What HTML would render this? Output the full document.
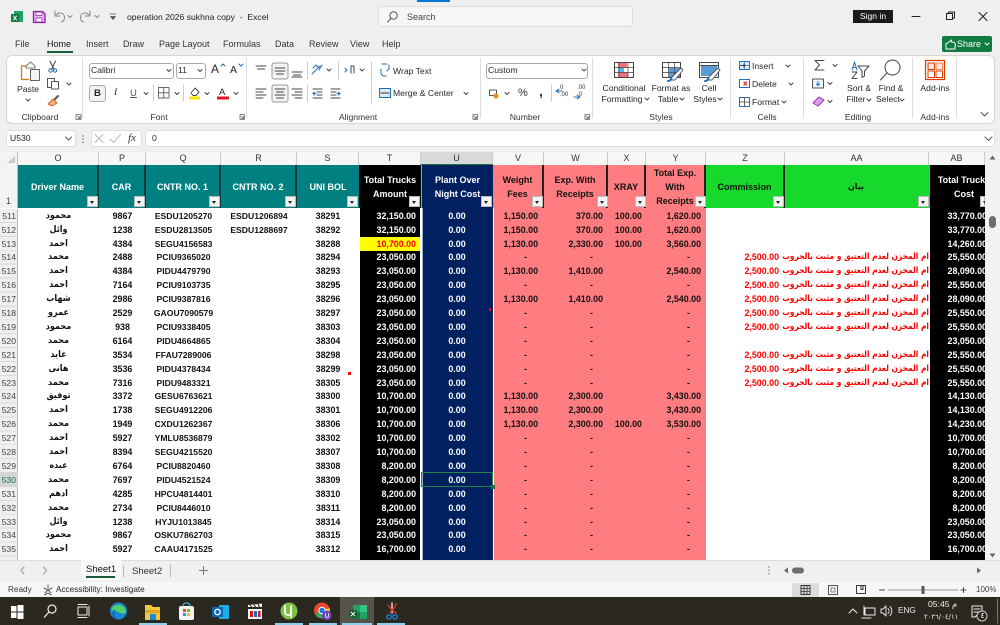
<!DOCTYPE html>
<html><head><meta charset="utf-8"><style>
html,body{margin:0;padding:0;width:1000px;height:625px;overflow:hidden;background:#efefef;font-family:"Liberation Sans","DejaVu Sans",sans-serif;color:#222}
div,span{position:absolute;white-space:nowrap}
svg{position:absolute;left:0;top:0}
.l{font-size:8.6px;line-height:11px;color:#262626}
.c{transform:translateX(-50%)}
.g{font-size:8.6px;line-height:11px;color:#333;transform:translateX(-50%);top:112px}
.t{font-size:9px;line-height:12px;top:38px;color:#333}
.h{top:152px;height:13px;line-height:13px;font-size:9px;text-align:center;background:#f6f6f6;border-right:1px solid #ccc;color:#333;box-sizing:border-box}
.k{top:165px;height:43px;box-sizing:border-box;border-right:2px solid #0b3b3b;color:#fff;font-weight:bold;font-size:9px;text-align:center;line-height:14px;display:flex;align-items:center;justify-content:center;white-space:normal}
.f{position:absolute;top:196px;width:11px;height:11px;background:#f3f3f3;border:1px solid #bbb;box-sizing:border-box}
.f:after{content:"";position:absolute;left:2px;top:4px;border:2.5px solid transparent;border-top:3px solid #222}
.r{position:absolute;left:0;width:985px;height:14px;overflow:hidden}
.r b{position:absolute;top:0;line-height:14px;font-size:8.9px;font-weight:bold;color:#111;white-space:nowrap}
.r .n{left:0;width:16px;text-align:right;font-weight:normal;color:#444;font-size:8.6px}
.r .o{left:18px;width:81px;text-align:center;font-size:9px;color:#111;font-family:"DejaVu Sans",sans-serif;transform:scaleX(.9)}
.r .p{left:99px;width:47px;text-align:center}
.r .q{left:146px;width:75px;text-align:center;font-size:8.6px}
.r .s{left:221px;width:76px;text-align:center;font-size:8.6px}
.r .u{left:297px;width:62px;text-align:center}
.r .a{left:360px;width:56px;text-align:right;color:#fff}
.r .y{left:360px;width:56px;text-align:right;color:#f00}
.r .w{left:422px;width:70px;text-align:center;color:#fff}
.r .v{left:494px;width:44px;text-align:right}
.r .x{left:544px;width:59px;text-align:right}
.r .z{left:608px;width:34px;text-align:right}
.r .e{left:646px;width:55px;text-align:right}
.r .d1{left:494px;width:33px;text-align:right}
.r .d2{left:544px;width:49px;text-align:right}
.r .d3{left:646px;width:44px;text-align:right}
.r .m{left:706px;width:73px;text-align:right;color:#f00}
.r .ar{left:729px;width:200px;direction:rtl;text-align:right;color:#f00;font-size:8.6px;font-family:"DejaVu Sans",sans-serif;transform:scaleX(.87);transform-origin:100% 50%}
.r .t2{left:930px;width:57px;text-align:right;color:#fff}
.cb{background:#fff;border:1px solid #aaa;border-radius:3px;box-sizing:border-box}
</style></head><body>

<div style="left:417px;top:0;width:33px;height:1.5px;background:#0078d4"></div>
<div style="left:378px;top:6px;width:255px;height:21px;background:#f6f6f6;border:1px solid #dcdcdc;border-radius:3px;box-sizing:border-box"></div>
<span style="left:407px;top:11px;font-size:9px;line-height:12px;color:#444">Search</span>
<span style="left:127px;top:11px;font-size:8.6px;line-height:12px;color:#222;white-space:pre">operation 2026 sukhna copy  -  Excel</span>
<div style="left:853px;top:10px;width:40px;height:13px;background:#1a1a1a;color:#fff;font-size:8.6px;line-height:13px;text-align:center">Sign in</div>
<span class="t" style="left:15px">File</span><span class="t" style="left:47px;color:#111">Home</span><span class="t" style="left:86px">Insert</span><span class="t" style="left:123px">Draw</span><span class="t" style="left:159px">Page Layout</span><span class="t" style="left:223px">Formulas</span><span class="t" style="left:275px">Data</span><span class="t" style="left:309px">Review</span><span class="t" style="left:350px">View</span><span class="t" style="left:382px">Help</span>
<div style="left:47px;top:51px;width:26px;height:1.5px;background:#1d5c3a"></div>
<div style="left:942px;top:36px;width:50px;height:16px;background:#107c41;border-radius:2px"></div>
<span style="left:957px;top:38px;font-size:9px;line-height:12px;color:#fff">Share</span>

<div style="left:6px;top:55px;width:989px;height:69px;background:#fff;border:1px solid #d6d6d6;border-radius:6px;box-sizing:border-box"></div>

<div class="cb" style="left:89px;top:62.500px;width:85px;height:16px"></div><span class="l" style="left:91px;top:65px;font-size:8.6px">Calibri</span>
<div class="cb" style="left:176px;top:62.500px;width:30px;height:16px"></div><span class="l" style="left:178px;top:65px">11</span>
<div class="cb" style="left:89px;top:85px;width:17px;height:17px;background:#f2f2f2"></div><span style="left:94px;top:87px;font-size:9.5px;font-weight:bold;line-height:13px">B</span>
<span style="left:114px;top:87px;font-size:9.5px;font-style:italic;font-family:'Liberation Serif',serif;line-height:13px">I</span>
<span style="left:130px;top:87px;font-size:9.5px;text-decoration:underline;line-height:13px;color:#555">U</span>
<div class="cb" style="left:486px;top:62.500px;width:102px;height:16px"></div><span class="l" style="left:488px;top:65px">Custom</span>
<span style="left:211px;top:62px;font-size:12px;line-height:14px">A</span><span style="left:230px;top:63px;font-size:10.5px;line-height:14px">A</span>
<span style="left:219px;top:87px;font-size:9.5px;line-height:11px">A</span>
<span class="l" style="left:393px;top:66px">Wrap Text</span><span class="l" style="left:393px;top:88px">Merge &amp; Center</span>
<span class="l c" style="left:28px;top:84px">Paste</span>
<span style="left:518px;top:86px;font-size:11px;line-height:14px;color:#333">%</span>
<span style="left:539px;top:84px;font-size:14px;font-weight:bold;line-height:14px;color:#333">,</span>
<span style="left:560px;top:85px;font-size:6px;line-height:7px;color:#333">0<br>.00</span><span style="left:577px;top:85px;font-size:6px;line-height:7px;color:#333">.00<br>&nbsp;0</span>
<span class="l c" style="left:624px;top:83px">Conditional</span><span class="l c" style="left:622px;top:94px">Formatting</span>
<span class="l c" style="left:671px;top:83px">Format as</span><span class="l c" style="left:668px;top:94px">Table</span>
<span class="l c" style="left:709px;top:83px">Cell</span><span class="l c" style="left:705px;top:94px">Styles</span>
<span class="l" style="left:752px;top:61px">Insert</span><span class="l" style="left:752px;top:79px">Delete</span><span class="l" style="left:752px;top:97px">Format</span>
<span class="l c" style="left:859px;top:83px">Sort &amp;</span><span class="l c" style="left:856px;top:94px">Filter</span>
<span class="l c" style="left:891px;top:83px">Find &amp;</span><span class="l c" style="left:888px;top:94px">Select</span>
<span class="l c" style="left:935px;top:83px">Add-ins</span>
<span class="g" style="left:40px">Clipboard</span><span class="g" style="left:159px">Font</span><span class="g" style="left:358px">Alignment</span><span class="g" style="left:525px">Number</span><span class="g" style="left:661px">Styles</span><span class="g" style="left:767px">Cells</span><span class="g" style="left:858px">Editing</span><span class="g" style="left:935px">Add-ins</span>

<div class="cb" style="left:6px;top:130px;width:70px;height:17px;border-color:#ddd"></div><span class="l" style="left:10px;top:133px">U530</span>
<div class="cb" style="left:91px;top:130px;width:51px;height:17px;border-color:#ddd"></div>
<span style="left:128px;top:131px;font-family:'Liberation Serif',serif;font-style:italic;font-size:11px;line-height:14px;color:#333">fx</span>
<div class="cb" style="left:145px;top:130px;width:850px;height:17px;border-color:#ddd"></div><span class="l" style="left:152px;top:133px">0</span>

<div style="left:0;top:152px;width:1000px;height:408px;background:#fff"></div>
<div style="left:0;top:152px;width:18px;height:56px;background:#f3f3f3;border-right:1px solid #bbb;box-sizing:border-box"></div>
<div style="left:0;top:208.700px;width:18px;height:351.300px;background:repeating-linear-gradient(180deg,#efefef 0,#efefef 13px,#d8d8d8 13px,#d8d8d8 13.896px);border-right:1px solid #bbb;box-sizing:border-box"></div>
<span style="left:6px;top:195px;font-size:9px;line-height:12px;color:#444">1</span>
<div class="h" style="left:18px;width:81px">O</div><div class="h" style="left:99px;width:47px">P</div><div class="h" style="left:146px;width:75px">Q</div><div class="h" style="left:221px;width:76px">R</div><div class="h" style="left:297px;width:62px">S</div><div class="h" style="left:359px;width:62px">T</div><div class="h" style="left:421px;width:72px;background:#d9d9d9;border-bottom:1px solid #1e7145">U</div><div class="h" style="left:493px;width:51px">V</div><div class="h" style="left:544px;width:64px">W</div><div class="h" style="left:608px;width:38px">X</div><div class="h" style="left:646px;width:60px">Y</div><div class="h" style="left:706px;width:79px">Z</div><div class="h" style="left:785px;width:144px">AA</div><div class="h" style="left:929px;width:56px">AB</div>

<div class="k" style="left:18px;width:81px;background:#008080">Driver Name</div>
<div class="k" style="left:99px;width:47px;background:#008080">CAR</div>
<div class="k" style="left:146px;width:75px;background:#008080">CNTR NO. 1</div>
<div class="k" style="left:221px;width:76px;background:#008080">CNTR NO. 2</div>
<div class="k" style="left:297px;width:62px;background:#008080;border-right:0">UNI BOL</div>
<div class="k" style="left:359px;width:62px;background:#000;border:0">Total Trucks<br>Amount</div>
<div class="k" style="left:421px;width:72px;background:#002060;border:0;border-left:1px solid #8ea5c8">Plant Over<br>Night Cost</div>
<div class="k" style="left:493px;width:51px;background:#ff7c80;color:#111;border-color:#222">Weight<br>Fees</div>
<div class="k" style="left:544px;width:64px;background:#ff7c80;color:#111;border-color:#222">Exp. With<br>Receipts</div>
<div class="k" style="left:608px;width:38px;background:#ff7c80;color:#111;border-color:#222">XRAY</div>
<div class="k" style="left:646px;width:60px;background:#ff7c80;color:#111;border-color:#222">Total Exp.<br>With<br>Receipts</div>
<div class="k" style="left:706px;width:79px;background:#16d92c;color:#111;border-color:#222">Commission</div>
<div class="k" style="left:785px;width:145px;background:#16d92c;color:#111;border:0;font-family:'DejaVu Sans',sans-serif;font-size:8px;padding-right:3px">بيان</div>
<div class="k" style="left:930px;width:55px;background:#000;border:0;overflow:hidden;display:block"><div style="left:4px;top:8px;width:60px;text-align:center">Total Trucks<br>Cost</div></div>

<div class="f" style="left:87px"></div><div class="f" style="left:134px"></div><div class="f" style="left:209px"></div><div class="f" style="left:285px"></div><div class="f" style="left:347px"></div><div class="f" style="left:409px"></div><div class="f" style="left:481px"></div><div class="f" style="left:532px"></div><div class="f" style="left:597px"></div><div class="f" style="left:635px"></div><div class="f" style="left:695px"></div><div class="f" style="left:773px"></div><div class="f" style="left:918px"></div><div class="f" style="left:980px;width:5px"></div>

<div style="left:360px;top:208px;width:60px;height:352px;background:#000"></div>
<div style="left:422px;top:208px;width:71px;height:352px;background:#002060;border-left:1px solid #9db1d0;box-sizing:border-box"></div>
<div style="left:493.500px;top:208px;width:212.500px;height:352px;background:#ff7c80"></div>
<div style="left:930px;top:208px;width:55px;height:352px;background:#000"></div>
<div style="left:360px;top:236.500px;width:60px;height:14px;background:#ff0"></div>
<div style="left:0;top:472.800px;width:18px;height:14px;background:#d5d5d5"></div>

<div class="r" style="top:208.700px"><b class="n">511</b><b class="o">محمود</b><b class="p">9867</b><b class="q">ESDU1205270</b><b class="s">ESDU1206894</b><b class="u">38291</b><b class="a">32,150.00</b><b class="w">0.00</b><b class="v">1,150.00</b><b class="x">370.00</b><b class="z">100.00</b><b class="e">1,620.00</b><b class="t2">33,770.00</b></div>
<div class="r" style="top:222.600px"><b class="n">512</b><b class="o">وائل</b><b class="p">1238</b><b class="q">ESDU2813505</b><b class="s">ESDU1288697</b><b class="u">38292</b><b class="a">32,150.00</b><b class="w">0.00</b><b class="v">1,150.00</b><b class="x">370.00</b><b class="z">100.00</b><b class="e">1,620.00</b><b class="t2">33,770.00</b></div>
<div class="r" style="top:236.500px"><b class="n">513</b><b class="o">احمد</b><b class="p">4384</b><b class="q">SEGU4156583</b><b class="u">38288</b><b class="y">10,700.00</b><b class="w">0.00</b><b class="v">1,130.00</b><b class="x">2,330.00</b><b class="z">100.00</b><b class="e">3,560.00</b><b class="t2">14,260.00</b></div>
<div class="r" style="top:250.400px"><b class="n">514</b><b class="o">محمد</b><b class="p">2488</b><b class="q">PCIU9365020</b><b class="u">38294</b><b class="a">23,050.00</b><b class="w">0.00</b><b class="d1">-</b><b class="d2">-</b><b class="d3">-</b><b class="m">2,500.00</b><b class="ar">ام المخزن لعدم التعتيق و مثبت بالجروب</b><b class="t2">25,550.00</b></div>
<div class="r" style="top:264.300px"><b class="n">515</b><b class="o">احمد</b><b class="p">4384</b><b class="q">PIDU4479790</b><b class="u">38293</b><b class="a">23,050.00</b><b class="w">0.00</b><b class="v">1,130.00</b><b class="x">1,410.00</b><b class="e">2,540.00</b><b class="m">2,500.00</b><b class="ar">ام المخزن لعدم التعتيق و مثبت بالجروب</b><b class="t2">28,090.00</b></div>
<div class="r" style="top:278.200px"><b class="n">516</b><b class="o">احمد</b><b class="p">7164</b><b class="q">PCIU9103735</b><b class="u">38295</b><b class="a">23,050.00</b><b class="w">0.00</b><b class="d1">-</b><b class="d2">-</b><b class="d3">-</b><b class="m">2,500.00</b><b class="ar">ام المخزن لعدم التعتيق و مثبت بالجروب</b><b class="t2">25,550.00</b></div>
<div class="r" style="top:292.100px"><b class="n">517</b><b class="o">شهاب</b><b class="p">2986</b><b class="q">PCIU9387816</b><b class="u">38296</b><b class="a">23,050.00</b><b class="w">0.00</b><b class="v">1,130.00</b><b class="x">1,410.00</b><b class="e">2,540.00</b><b class="m">2,500.00</b><b class="ar">ام المخزن لعدم التعتيق و مثبت بالجروب</b><b class="t2">28,090.00</b></div>
<div class="r" style="top:306px"><b class="n">518</b><b class="o">عمرو</b><b class="p">2529</b><b class="q">GAOU7090579</b><b class="u">38297</b><b class="a">23,050.00</b><b class="w">0.00</b><b class="d1">-</b><b class="d2">-</b><b class="d3">-</b><b class="m">2,500.00</b><b class="ar">ام المخزن لعدم التعتيق و مثبت بالجروب</b><b class="t2">25,550.00</b></div>
<div class="r" style="top:319.900px"><b class="n">519</b><b class="o">محمود</b><b class="p">938</b><b class="q">PCIU9338405</b><b class="u">38303</b><b class="a">23,050.00</b><b class="w">0.00</b><b class="d1">-</b><b class="d2">-</b><b class="d3">-</b><b class="m">2,500.00</b><b class="ar">ام المخزن لعدم التعتيق و مثبت بالجروب</b><b class="t2">25,550.00</b></div>
<div class="r" style="top:333.800px"><b class="n">520</b><b class="o">محمد</b><b class="p">6164</b><b class="q">PIDU4664865</b><b class="u">38304</b><b class="a">23,050.00</b><b class="w">0.00</b><b class="d1">-</b><b class="d2">-</b><b class="d3">-</b><b class="t2">23,050.00</b></div>
<div class="r" style="top:347.700px"><b class="n">521</b><b class="o">عايد</b><b class="p">3534</b><b class="q">FFAU7289006</b><b class="u">38298</b><b class="a">23,050.00</b><b class="w">0.00</b><b class="d1">-</b><b class="d2">-</b><b class="d3">-</b><b class="m">2,500.00</b><b class="ar">ام المخزن لعدم التعتيق و مثبت بالجروب</b><b class="t2">25,550.00</b></div>
<div class="r" style="top:361.600px"><b class="n">522</b><b class="o">هانى</b><b class="p">3536</b><b class="q">PIDU4378434</b><b class="u">38299</b><b class="a">23,050.00</b><b class="w">0.00</b><b class="d1">-</b><b class="d2">-</b><b class="d3">-</b><b class="m">2,500.00</b><b class="ar">ام المخزن لعدم التعتيق و مثبت بالجروب</b><b class="t2">25,550.00</b></div>
<div class="r" style="top:375.500px"><b class="n">523</b><b class="o">محمد</b><b class="p">7316</b><b class="q">PIDU9483321</b><b class="u">38305</b><b class="a">23,050.00</b><b class="w">0.00</b><b class="d1">-</b><b class="d2">-</b><b class="d3">-</b><b class="m">2,500.00</b><b class="ar">ام المخزن لعدم التعتيق و مثبت بالجروب</b><b class="t2">25,550.00</b></div>
<div class="r" style="top:389.400px"><b class="n">524</b><b class="o">توفيق</b><b class="p">3372</b><b class="q">GESU6763621</b><b class="u">38300</b><b class="a">10,700.00</b><b class="w">0.00</b><b class="v">1,130.00</b><b class="x">2,300.00</b><b class="e">3,430.00</b><b class="t2">14,130.00</b></div>
<div class="r" style="top:403.300px"><b class="n">525</b><b class="o">احمد</b><b class="p">1738</b><b class="q">SEGU4912206</b><b class="u">38301</b><b class="a">10,700.00</b><b class="w">0.00</b><b class="v">1,130.00</b><b class="x">2,300.00</b><b class="e">3,430.00</b><b class="t2">14,130.00</b></div>
<div class="r" style="top:417.200px"><b class="n">526</b><b class="o">محمد</b><b class="p">1949</b><b class="q">CXDU1262367</b><b class="u">38306</b><b class="a">10,700.00</b><b class="w">0.00</b><b class="v">1,130.00</b><b class="x">2,300.00</b><b class="z">100.00</b><b class="e">3,530.00</b><b class="t2">14,230.00</b></div>
<div class="r" style="top:431.100px"><b class="n">527</b><b class="o">احمد</b><b class="p">5927</b><b class="q">YMLU8536879</b><b class="u">38302</b><b class="a">10,700.00</b><b class="w">0.00</b><b class="d1">-</b><b class="d2">-</b><b class="d3">-</b><b class="t2">10,700.00</b></div>
<div class="r" style="top:445px"><b class="n">528</b><b class="o">احمد</b><b class="p">8394</b><b class="q">SEGU4215520</b><b class="u">38307</b><b class="a">10,700.00</b><b class="w">0.00</b><b class="d1">-</b><b class="d2">-</b><b class="d3">-</b><b class="t2">10,700.00</b></div>
<div class="r" style="top:458.900px"><b class="n">529</b><b class="o">عبده</b><b class="p">6764</b><b class="q">PCIU8820460</b><b class="u">38308</b><b class="a">8,200.00</b><b class="w">0.00</b><b class="d1">-</b><b class="d2">-</b><b class="d3">-</b><b class="t2">8,200.00</b></div>
<div class="r" style="top:472.800px"><b class="n" style="color:#1e7145">530</b><b class="o">محمد</b><b class="p">7697</b><b class="q">PIDU4521524</b><b class="u">38309</b><b class="a">8,200.00</b><b class="w">0.00</b><b class="d1">-</b><b class="d2">-</b><b class="d3">-</b><b class="t2">8,200.00</b></div>
<div class="r" style="top:486.700px"><b class="n">531</b><b class="o">ادهم</b><b class="p">4285</b><b class="q">HPCU4814401</b><b class="u">38310</b><b class="a">8,200.00</b><b class="w">0.00</b><b class="d1">-</b><b class="d2">-</b><b class="d3">-</b><b class="t2">8,200.00</b></div>
<div class="r" style="top:500.600px"><b class="n">532</b><b class="o">محمد</b><b class="p">2734</b><b class="q">PCIU8446010</b><b class="u">38311</b><b class="a">8,200.00</b><b class="w">0.00</b><b class="d1">-</b><b class="d2">-</b><b class="d3">-</b><b class="t2">8,200.00</b></div>
<div class="r" style="top:514.500px"><b class="n">533</b><b class="o">وائل</b><b class="p">1238</b><b class="q">HYJU1013845</b><b class="u">38314</b><b class="a">23,050.00</b><b class="w">0.00</b><b class="d1">-</b><b class="d2">-</b><b class="d3">-</b><b class="t2">23,050.00</b></div>
<div class="r" style="top:528.400px"><b class="n">534</b><b class="o">محمود</b><b class="p">9867</b><b class="q">OSKU7862703</b><b class="u">38315</b><b class="a">23,050.00</b><b class="w">0.00</b><b class="d1">-</b><b class="d2">-</b><b class="d3">-</b><b class="t2">23,050.00</b></div>
<div class="r" style="top:542.300px"><b class="n">535</b><b class="o">احمد</b><b class="p">5927</b><b class="q">CAAU4171525</b><b class="u">38312</b><b class="a">16,700.00</b><b class="w">0.00</b><b class="d1">-</b><b class="d2">-</b><b class="d3">-</b><b class="t2">16,700.00</b></div>

<div style="left:421px;top:472px;width:72px;height:14.500px;border:1.500px solid #1e8449;box-sizing:border-box"></div>
<div style="left:491px;top:484.500px;width:4px;height:4px;background:#1e7145"></div>
<div style="left:348px;top:372px;width:2.500px;height:2.500px;background:#f00"></div>
<div style="left:488.500px;top:308px;width:2.500px;height:2.500px;background:#f00"></div>

<div style="left:985px;top:152px;width:15px;height:408px;background:#f2f2f2"></div>
<div style="left:989px;top:216px;width:7px;height:12px;background:#6e6e6e;border-radius:3.500px"></div>

<div style="left:0;top:560px;width:1000px;height:22px;background:#f0f0f0;border-top:1px solid #ddd;box-sizing:border-box"></div>
<div style="left:81px;top:560px;width:40px;height:20px;background:#f8f8f8;border-radius:0 0 4px 4px"></div>
<span style="left:86px;top:563px;font-size:9.500px;line-height:13px;color:#111">Sheet1</span>
<div style="left:86px;top:576px;width:29px;height:1.500px;background:#1d5c3a"></div>
<span style="left:132px;top:565px;font-size:9.500px;line-height:13px;color:#333">Sheet2</span>
<div style="left:0;top:582px;width:1000px;height:15px;background:#f7f7f7"></div>
<span style="left:8px;top:584px;font-size:8.200px;line-height:11px;color:#333">Ready</span>
<span style="left:56px;top:584px;font-size:8.200px;line-height:11px;color:#222">Accessibility: Investigate</span>
<div style="left:792px;top:583px;width:27px;height:14px;background:#dcdcdc"></div>
<span style="left:976px;top:584px;font-size:8px;line-height:11px;color:#444">100%</span>

<div style="left:0;top:597px;width:1000px;height:28px;background:#2b281f"></div>
<div style="left:340px;top:597px;width:34px;height:28px;background:#55534b"></div>
<div style="left:139px;top:623px;width:28px;height:2px;background:#8fd0ef"></div><div style="left:275px;top:623px;width:28px;height:2px;background:#8fd0ef"></div><div style="left:309px;top:623px;width:28px;height:2px;background:#8fd0ef"></div><div style="left:342px;top:623px;width:30px;height:2px;background:#8fd0ef"></div><div style="left:377px;top:623px;width:28px;height:2px;background:#8fd0ef"></div>
<span style="left:898px;top:605px;font-size:8.200px;line-height:11px;color:#eee">ENG</span>
<span style="left:928px;top:598px;font-size:8.600px;line-height:12px;color:#eee">05:45 م</span>
<span style="left:924px;top:611px;font-size:6.900px;line-height:12px;color:#eee;font-family:'DejaVu Sans',sans-serif">٢٠٢٦/٠٤/١١</span>

<svg width="1000" height="625" viewBox="0 0 1000 625" fill="none" stroke-linecap="round" stroke-linejoin="round">
<!-- title bar -->
<rect x="14" y="11" width="9" height="11" fill="#21a366"/><rect x="11" y="14" width="8" height="8" fill="#107c41"/><path d="M13.500 16l3 4m0-4l-3 4" stroke="#fff"/>
<path d="M33.500 11.500h9l2.500 2.500v8.500h-11.500z" stroke="#8a1fa8" stroke-width="1.300" fill="#e9b8f0"/><rect x="36" y="12" width="6" height="3.500" fill="#fff" stroke="#8a1fa8" stroke-width=".7"/><rect x="36" y="18" width="6" height="4" fill="#fff" stroke="#8a1fa8" stroke-width=".7"/>
<path d="M55 11v5h5M55.500 15.500c3-4 9-3 9 2 0 2-1 4-3 4.500" stroke="#8a8a8a"/><path d="M68 15.500l2 2 2-2M95 15.500l2 2 2-2" stroke="#888"/>
<path d="M90 11v5h-5M89.500 15.500c-3-4-9-3-9 2 0 2 1 4 3 4.500" stroke="#8a8a8a"/>
<path d="M110 14h6M110.500 16.500h5l-2.500 3z" stroke="#555" fill="#555" stroke-width=".7"/>
<circle cx="393.500" cy="15.500" r="3.700" stroke="#555"/><path d="M391 18.500l-3.500 3.500" stroke="#555"/>
<path d="M912 16.500h8" stroke="#222"/><rect x="946.500" y="13.500" width="6" height="6" stroke="#222"/><path d="M948.500 13.500v-1.500h6v6h-1.500" stroke="#222"/>
<path d="M979 12.500l8 8m0-8l-8 8" stroke="#222"/>
<path d="M947 43.500l4.500-3.500v2c3 0 4 1 4 3.500" stroke="#fff"/><path d="M946 43.500v5.500h9v-3" stroke="#fff"/><path d="M985 43l2 2 2-2" stroke="#fff"/>

<!-- separators -->
<path d="M82.500 58v60M246.500 58v60M480.500 58v60M592.500 58v60M730.500 58v60M803.500 58v60M912.500 58v60M956.500 58v60" stroke="#dedede"/>
<path d="M153.500 85v16M183.500 85v16M307.500 62v17M307.500 85v17M338.500 62v17M371.500 62v42M551.500 85v16" stroke="#ccc"/>

<!-- clipboard -->
<path d="M31 66h-9.500v13.500h7" stroke="#d97a1a" stroke-width="1.300"/><path d="M26 66l4.500-4 4.500 4v2h-9z" stroke="#777" fill="#fff"/>
<rect x="30.500" y="69.500" width="9" height="11" stroke="#666" fill="#f4f4f4"/><path d="M26 99l2 2 2-2" stroke="#444"/>
<path d="M50 61l4 8.500M55.500 61l-4 8.500" stroke="#444"/><circle cx="50.500" cy="70.500" r="1.700" stroke="#1c6fb8"/><circle cx="55" cy="70.500" r="1.700" stroke="#1c6fb8"/>
<rect x="47.500" y="78.500" width="7" height="9" stroke="#555" fill="#fff"/><rect x="51.500" y="81.500" width="7" height="7.500" stroke="#555" fill="#fff"/><path d="M67 83l2 2 2-2" stroke="#444"/>
<path d="M48 104l5-5 4 4-5 3z" stroke="#d4661a" fill="#f4b183"/><path d="M55 99l3-3" stroke="#555" stroke-width="2"/>
<path d="M76 114.500h5v5h-5zM77.500 116l2.500 2.500m0-2v2h-2M240 114.500h4.500v5h-4.500zM241 116l2.500 2.500m0-2v2h-2M473 114.500h4.500v5h-4.500zM474 116l2.500 2.500m0-2v2h-2M585 114.500h4.500v5h-4.500zM586 116l2.500 2.500m0-2v2h-2" stroke="#666" stroke-width=".8"/>

<!-- font -->
<path d="M167 69.500l2 2 2-2M198 69.500l2 2 2-2M144 92.500l2 2 2-2M175 92.500l2 2 2-2M205 92.500l2 2 2-2M234 92.500l2 2 2-2" stroke="#444"/>
<path d="M221 66l2-2 2 2" stroke="#1c6fb8"/><path d="M239 64l2 2 2-2" stroke="#1c6fb8"/>
<path d="M158.500 87.500h10.500v10.500h-10.500zM163.700 87.500v10.500M158.500 92.700h10.500" stroke="#666" stroke-dasharray="1.500 .7"/>
<path d="M191 93l4-5 4 4-3 3.500h-3z" stroke="#444"/>
<rect x="189" y="96.500" width="11" height="3" fill="#ffe600"/><rect x="217" y="96.500" width="12" height="3" fill="#e0141e"/>

<!-- alignment -->
<rect x="272" y="63" width="16" height="16" rx="2" stroke="#999" fill="#f4f4f4"/><rect x="272" y="85" width="16" height="17" rx="2" stroke="#999" fill="#f4f4f4"/>
<path d="M256 66h10M257.500 69h7M275 68h10M275 71h10M276.500 74h7M292 72h10M293.500 75h7M292 77h10" stroke="#444"/>
<path d="M256 89h10M256 92h7M256 95h10M256 98h7M275 89h10M276.500 92h7M275 95h10M276.500 98h7M292 89h10M295 92h7M292 95h10M295 98h7" stroke="#444"/>
<path d="M312 74l8-8M313 68l3-3 3 3M322 65l-3 5" stroke="#1c6fb8"/><path d="M327 69l2 2 2-2M360 69l2 2 2-2M464 92.500l2 2 2-2" stroke="#444"/>
<path d="M345 68l2 2-2 2" stroke="#1c6fb8"/><path d="M351 66v7M354 66v7M351 66h3" stroke="#444"/>
<path d="M313 89h9M313 98h9M317 92h5M317 95h5" stroke="#444"/><path d="M316 93.500h-3m1.500-1.500l-1.500 1.500 1.500 1.500" stroke="#1c6fb8"/>
<path d="M331 89h9M331 98h9M331 92h5M331 95h5" stroke="#444"/><path d="M337 93.500h3m-1.500-1.500l1.500 1.500-1.500 1.500" stroke="#1c6fb8"/>
<path d="M382 64h5M389 65v4l-2 2M381 69v5l2 2h3" stroke="#1c6fb8"/>
<rect x="379.500" y="88.500" width="11" height="9" stroke="#1c6fb8" fill="#dcebf7"/><path d="M381 93h8" stroke="#333"/>

<!-- number -->
<rect x="489.500" y="90" width="7" height="5.500" stroke="#555"/><circle cx="496" cy="96" r="2.500" fill="#e8871e"/><path d="M505 92.500l2 2 2-2M582 69l2 2 2-2" stroke="#444"/>
<path d="M556 91h6m-3-2l-3 2 3 2M574 97h6m-3-2l3 2-3 2" stroke="#1c6fb8"/>

<!-- styles -->
<rect x="614.500" y="62.500" width="19" height="15" stroke="#444" fill="#fff"/><rect x="618" y="63" width="9" height="5" fill="#f0707a"/><rect x="618" y="68" width="6" height="4" fill="#5db6e8"/><rect x="618" y="72" width="10" height="5" fill="#f0707a"/><path d="M614.500 67.500h19M614.500 72.500h19M619 62.500v15M628 62.500v15" stroke="#444" stroke-width=".7"/>
<rect x="662.500" y="62.500" width="18" height="15" stroke="#444" fill="#fff"/><rect x="669" y="68" width="11" height="9" fill="#5b9bd5"/><path d="M662.500 67.500h18M662.500 72.500h18M668.500 62.500v15M674.500 62.500v15" stroke="#444" stroke-width=".7"/><path d="M671 78l10-10 2 2-8 10h-5z" stroke="#555" fill="#fff"/><path d="M668 81c2 0 3-1 3.500-3" stroke="#1c6fb8" stroke-width="2"/>
<rect x="699.500" y="62.500" width="19" height="15" stroke="#444" fill="#fff"/><rect x="701" y="66" width="16" height="10" fill="#5b9bd5"/><path d="M699.500 65.500h19" stroke="#444"/><path d="M708 78l10-10 2 2-8 10h-5z" stroke="#555" fill="#fff"/><path d="M705 81c2 0 3-1 3.500-3" stroke="#1c6fb8" stroke-width="2"/>
<path d="M645 98l2 2 2-2M680 98l2 2 2-2M718 98l2 2 2-2" stroke="#444"/>

<!-- cells -->
<rect x="739.500" y="61.500" width="10" height="8" stroke="#1c6fb8" fill="#dcebf7"/><path d="M744.500 61.500v8M739.500 65.500h10" stroke="#1c6fb8" stroke-width=".7"/><path d="M741 65.500h4m-1.500-1.500l1.500 1.500-1.500 1.500" stroke="#333" stroke-width=".8"/>
<rect x="739.500" y="79.500" width="10" height="8" stroke="#1c6fb8"/><path d="M744 82l2.500 3m0-3l-2.500 3" stroke="#e0141e" stroke-width="1.200"/><path d="M786 65l2 2 2-2M789 83l2 2 2-2M782 101l2 2 2-2" stroke="#444"/>
<rect x="739.500" y="97.500" width="10" height="9" stroke="#1c6fb8"/><path d="M739.500 102h10M744.500 97.500v9" stroke="#444" stroke-width=".8"/>

<!-- editing -->
<path d="M824 60.500h-9l4.500 4.500-4.500 5h9" stroke="#444"/><path d="M833 64.500l2 2 2-2M828 82.500l2 2 2-2M828 100.500l2 2 2-2" stroke="#444"/>
<rect x="812.500" y="79" width="11" height="9" stroke="#555" fill="#eaf2fa"/><path d="M818 81.500v4m-1.500-1.500l1.500 1.500 1.500-1.500" stroke="#1c6fb8"/>
<path d="M813 103l6-6 5 3-6 6z" stroke="#9b2fb5" fill="#d8a6e6"/>
<path d="M852 70l2.500-8 2.500 8M853 67.500h3" stroke="#1c6fb8"/><path d="M852 72h5l-5 6.500h5" stroke="#444"/>
<path d="M858 66h11l-4.500 5v5l-2.500 1.500v-6.500z" stroke="#444"/>
<circle cx="892.500" cy="67.500" r="7.500" stroke="#444"/><path d="M887 73l-6.500 7" stroke="#444"/>
<path d="M867 99l2 2 2-2M900 99l2 2 2-2" stroke="#444"/>

<!-- add-ins -->
<rect x="925.500" y="60.500" width="19" height="19" stroke="#d83b01" stroke-width="1.200"/><rect x="928" y="63" width="6.500" height="6.500" stroke="#d83b01" fill="#fde6dc"/><rect x="936" y="63" width="6.500" height="6.500" stroke="#e88a5a" fill="#fde6dc"/><rect x="928" y="71" width="6.500" height="6.500" stroke="#d83b01"/><rect x="936" y="71" width="6.500" height="6.500" stroke="#d83b01"/>
<path d="M981 112.500l3.500 3.500 3.500-3.500" stroke="#555"/>

<!-- formula bar -->
<path d="M65.500 137l3 3 3-3M985 137l3.500 3.500 3.500-3.500" stroke="#555"/>
<circle cx="83" cy="136" r=".7" fill="#666"/><circle cx="83" cy="139" r=".7" fill="#666"/><circle cx="83" cy="142" r=".7" fill="#666"/>
<path d="M95 134.500l8 8m0-8l-8 8" stroke="#bbb"/><path d="M110 139l3.500 3.500 7-8" stroke="#bbb"/>

<!-- sheet corner -->
<path d="M15 156v7h-8z" fill="#c9c9c9"/>
<!-- scrollbar arrows -->
<path d="M989.500 159.500l3-4 3 4z" fill="#666"/><path d="M989.500 553.500l3 4 3-4z" fill="#666"/>

<!-- tabs -->
<path d="M24 567l-3 3.500 3 3.500M43.500 567l3 3.500-3 3.500" stroke="#999"/>
<path d="M123.500 565v12M170.500 565v12" stroke="#bbb"/><path d="M199.500 570.500h8M203.500 566.500v8" stroke="#777"/>
<circle cx="769" cy="567" r=".7" fill="#777"/><circle cx="769" cy="570.500" r=".7" fill="#777"/><circle cx="769" cy="574" r=".7" fill="#777"/>
<path d="M788 567.500l-4 3 4 3z" fill="#666"/><rect x="792" y="567.500" width="12" height="6" rx="3" fill="#6e6e6e"/><path d="M977 567.500l4 3-4 3z" fill="#666"/>

<!-- status -->
<path d="M48 585v3M44 588l4 2 4-2M45 593l3-3 3 3M44.500 595l3.500-2 3.500 2" stroke="#444" stroke-width=".9" stroke-dasharray="1.500 .6"/>
<rect x="801" y="585.500" width="9" height="9" stroke="#333"/><path d="M804 585.500v9M807 585.500v9M801 588.500h9M801 591.500h9" stroke="#333" stroke-width=".8"/>
<rect x="828.500" y="585.500" width="9" height="9" stroke="#555"/><rect x="831" y="588" width="4" height="4" stroke="#555" stroke-width=".7"/>
<path d="M856.500 585.500h9v8h-9zM861 585.500v4h2v-4" stroke="#333"/>
<path d="M879.500 590h5M961 590h5M963.500 587.500v5" stroke="#444"/><path d="M888 590h70" stroke="#999"/><rect x="921.500" y="586" width="3" height="8" fill="#555"/>

<!-- taskbar icons -->
<rect x="11" y="606" width="5.500" height="5.500" fill="#fff"/><rect x="17.500" y="605" width="6" height="6.500" fill="#fff"/><rect x="11" y="612.500" width="5.500" height="5.500" fill="#fff"/><rect x="17.500" y="612.500" width="6" height="6.500" fill="#fff"/>
<circle cx="52" cy="609" r="4" stroke="#eee" stroke-width="1.200"/><path d="M49 612l-4.500 5" stroke="#eee" stroke-width="1.300"/>
<rect x="78" y="607" width="9" height="8" stroke="#eee"/><path d="M78 604.500h9M78 617.500h9M89 606v10" stroke="#eee"/>
<circle cx="118.500" cy="611" r="8.500" fill="#1b87d6"/><path d="M111 609c3-6 13-6 15 2 0 3-4 3-6 2-3-2-7-2-9-4z" fill="#4fcf6a"/><path d="M117 619c-4-2-4-7-1-9-3 0-4 3-3 6 1 2 2 3 4 3z" fill="#0c59a4"/>
<path d="M145 605h6l2 2h7v13h-15z" fill="#f5c542"/><rect x="145" y="610" width="15" height="3" fill="#e0a81e"/><rect x="150" y="614" width="6" height="6" fill="#1c8ad6"/>
<rect x="179" y="606" width="15" height="14" rx="2" fill="#f4f4f4"/><path d="M183 606c0-4 7-4 7 0" stroke="#38b6d8" stroke-width="1.300"/><rect x="183" y="609" width="3" height="3" fill="#e8481c"/><rect x="187" y="609" width="3" height="3" fill="#7cb81c"/><rect x="183" y="613" width="3" height="3" fill="#1ca3e8"/><rect x="187" y="613" width="3" height="3" fill="#fbb81c"/>
<rect x="219" y="605" width="10" height="14" rx="1" fill="#1caee8"/><rect x="212" y="607" width="11" height="10" rx="1" fill="#0b66b8"/><circle cx="217.500" cy="612" r="2.700" stroke="#fff" stroke-width="1.300"/>
<rect x="248" y="609" width="14" height="10" fill="#f3f3f3"/><path d="M248 605l14-1.500v3.500h-14z" fill="#f3f3f3"/><path d="M250 605l1.500 2M254 604.500l1.500 2.500M258 604l1.500 3" stroke="#222"/>
<rect x="250" y="611" width="3" height="6" fill="#e0141e"/><rect x="254" y="611" width="3" height="6" fill="#1c6fb8"/><rect x="258" y="611" width="2.500" height="6" fill="#e0141e"/>
<circle cx="289" cy="611" r="8.500" fill="#7cc242"/><path d="M285 606v6c0 3 4 4 6 2v3M291 606v11" stroke="#fff" stroke-width="1.800"/>
<circle cx="322" cy="610.500" r="8" fill="#e8452c"/><path d="M322 610.500l7.500-2.500a8 8 0 0 1-5 10z" fill="#f5c033"/><path d="M322 610.500l2.500 7.500a8 8 0 0 1-9.500-4z" fill="#34a853"/><circle cx="322" cy="610.500" r="3.200" fill="#1a73e8" stroke="#fff"/><circle cx="327" cy="615.500" r="4.800" fill="#6a3fb5"/><path d="M325.500 613.500v3c0 1 3 1 3 0v-3" stroke="#fff" stroke-width=".8"/>
<rect x="353" y="605" width="14" height="14" rx="1" fill="#21a366"/><rect x="360" y="605" width="7" height="7" fill="#33c481"/><rect x="353" y="612" width="7" height="7" fill="#107c41"/><rect x="349" y="610" width="8" height="8" rx="1" fill="#0e5c2f"/><path d="M351 612l4 4m0-4l-4 4" stroke="#fff" stroke-width=".9"/>
<path d="M392 603v10" stroke="#ddd" stroke-width="1.500"/><path d="M388 605c2 3 5 6 8 8M396 604c-1 3-3 6-6 8" stroke="#e0301e" stroke-width="1.500"/><circle cx="389" cy="617" r="2.200" stroke="#1c8ad6" stroke-width="1.300"/><circle cx="395" cy="617" r="2.200" stroke="#1c8ad6" stroke-width="1.300"/>
<!-- tray -->
<path d="M849 613l4-4 4 4" stroke="#eee"/>
<rect x="865" y="608" width="10" height="7" stroke="#eee"/><path d="M864 606v9M862 618h9" stroke="#eee"/>
<path d="M881 609v4h2l3 3v-10l-3 3zM888 608.500c1.500 1.500 1.500 3.500 0 5M890 606.500c2.500 2.500 2.500 6.500 0 9" stroke="#eee" stroke-width=".9"/>
<path d="M972 606h10v9h-5l-2 2h-3zM974 609h6M974 612h6" stroke="#eee"/><circle cx="982" cy="616" r="5" fill="#2b281f" stroke="#ccc"/><path d="M983.500 613.500c-2-.5-2.500 1.500-.5 2-2 0-2 2.500.5 2" stroke="#eee" stroke-width=".8"/>
<path d="M997.500 599v24" stroke="#777"/>
</svg>
</body></html>
